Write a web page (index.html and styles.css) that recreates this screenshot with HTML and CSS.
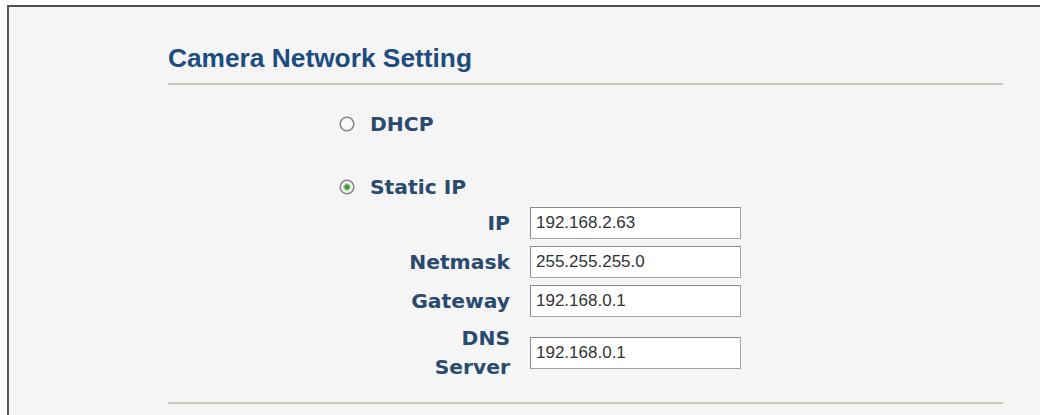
FILE: index.html
```html
<!DOCTYPE html>
<html>
<head>
<meta charset="utf-8">
<link rel="stylesheet" href="styles.css">
</head>
<body>
<div class="frame">
  <div class="panel">
    <h1 class="title">Camera Network Setting</h1>
    <div class="options">
      <div class="radio-row dhcp">
        <svg class="radio" width="16" height="16" viewBox="0 0 16 16"><circle cx="8" cy="8" r="6.8" fill="#fafafa" stroke="#878787" stroke-width="1.6"/></svg>
        <span class="opt-label">DHCP</span>
      </div>
      <div class="radio-row static">
        <svg class="radio" width="16" height="16" viewBox="0 0 16 16"><circle cx="8" cy="8" r="6.8" fill="#fafafa" stroke="#878787" stroke-width="1.6"/><circle cx="8" cy="8" r="4.2" fill="#c3e4c3"/><circle cx="8" cy="8" r="2.7" fill="#3f9a3f"/></svg>
        <span class="opt-label">Static IP</span>
      </div>
      <div class="fields">
        <label class="f-label">IP</label>
        <div class="f-input">192.168.2.63</div>
        <label class="f-label">Netmask</label>
        <div class="f-input">255.255.255.0</div>
        <label class="f-label">Gateway</label>
        <div class="f-input">192.168.0.1</div>
        <label class="f-label two">DNS<br>Server</label>
        <div class="f-input">192.168.0.1</div>
      </div>
    </div>
    <div class="bottom-rule"></div>
  </div>
</div>
</body>
</html>
```
FILE: styles.css
```css
html, body {
  margin: 0;
  padding: 0;
  background: #ffffff;
}
body {
  height: 415px;
  overflow: hidden;
}
.frame {
  margin: 5px 0 0 7px;
  height: 420px;
  border-top: 2px solid #4e4e4e;
  border-left: 2px solid #5a5a5a;
  background: #f5f5f5;
  box-sizing: border-box;
}
.panel {
  margin-left: 159px;
  width: 835px;
  display: flex;
  flex-direction: column;
}
.title {
  margin: 36px 0 0 0;
  padding-bottom: 10px;
  border-bottom: 2px solid #c9cabd;
  font-family: "Liberation Sans", Arial, sans-serif;
  font-weight: bold;
  font-size: 26.3px;
  line-height: 30px;
  color: #1d4c80;
}
.options {
  display: flex;
  flex-direction: column;
  padding-left: 171px;
}
.radio-row {
  display: flex;
  align-items: center;
  height: 24px;
  gap: 15px;
}
.dhcp {
  margin-top: 27px;
}
.static {
  margin-top: 39px;
}
.radio {
  display: block;
  flex: none;
}
.opt-label, .f-label {
  font-family: "DejaVu Sans", Verdana, sans-serif;
  font-weight: bold;
  font-size: 20.3px;
  color: #2a4a70;
}
.fields {
  display: grid;
  grid-template-columns: 110px 211px;
  column-gap: 20px;
  row-gap: 7px;
  margin-left: 61px;
  margin-top: 8px;
  align-items: center;
}
.f-label {
  text-align: right;
  line-height: 27px;
}
.f-label.two {
  line-height: 29px;
}
.f-input {
  height: 32px;
  box-sizing: border-box;
  border: 1px solid #a3a3a3;
  border-top-color: #8c8c8c;
  border-left-color: #8c8c8c;
  background: #ffffff;
  padding-left: 5px;
  font-family: "Liberation Sans", Arial, sans-serif;
  font-size: 17px;
  line-height: 30px;
  color: #333333;
}
.bottom-rule {
  margin-top: 20px;
  border-top: 2px solid #c9cabd;
}
```
